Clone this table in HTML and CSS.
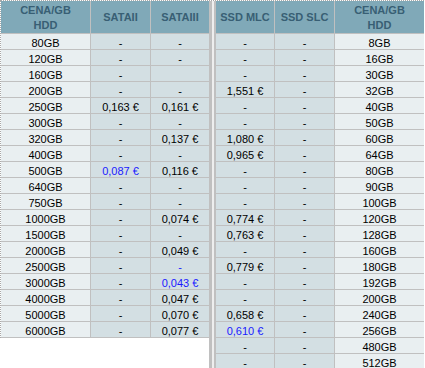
FILE: index.html
```html
<!DOCTYPE html>
<html>
<head>
<meta charset="utf-8">
<link rel="stylesheet" href="styles.css">
</head>
<body>
<div class="wrap">
  <div class="pane pane-left">
    <table class="grid grid-left">
      <colgroup><col class="c-cap"><col class="c-a"><col class="c-b"></colgroup>
      <thead>
        <tr><th class="two">CENA/GB<br>HDD</th><th>SATAII</th><th class="last">SATAIII</th></tr>
      </thead>
      <tbody>
        <tr><td class="cap">80GB</td><td>-</td><td class="last">-</td></tr>
        <tr><td class="cap">120GB</td><td>-</td><td class="last">-</td></tr>
        <tr><td class="cap">160GB</td><td>-</td><td class="last"></td></tr>
        <tr><td class="cap">200GB</td><td>-</td><td class="last">-</td></tr>
        <tr><td class="cap">250GB</td><td>0,163 €</td><td class="last">0,161 €</td></tr>
        <tr><td class="cap">300GB</td><td>-</td><td class="last">-</td></tr>
        <tr><td class="cap">320GB</td><td>-</td><td class="last">0,137 €</td></tr>
        <tr><td class="cap">400GB</td><td>-</td><td class="last">-</td></tr>
        <tr><td class="cap">500GB</td><td class="best">0,087 €</td><td class="last">0,116 €</td></tr>
        <tr><td class="cap">640GB</td><td>-</td><td class="last">-</td></tr>
        <tr><td class="cap">750GB</td><td>-</td><td class="last">-</td></tr>
        <tr><td class="cap">1000GB</td><td>-</td><td class="last">0,074 €</td></tr>
        <tr><td class="cap">1500GB</td><td>-</td><td class="last">-</td></tr>
        <tr><td class="cap">2000GB</td><td>-</td><td class="last">0,049 €</td></tr>
        <tr><td class="cap">2500GB</td><td>-</td><td class="last best">-</td></tr>
        <tr><td class="cap">3000GB</td><td>-</td><td class="last best">0,043 €</td></tr>
        <tr><td class="cap">4000GB</td><td>-</td><td class="last">0,047 €</td></tr>
        <tr><td class="cap">5000GB</td><td>-</td><td class="last">0,070 €</td></tr>
        <tr><td class="cap">6000GB</td><td>-</td><td class="last">0,077 €</td></tr>
      </tbody>
    </table>
  </div>
  <div class="gap"></div>
  <div class="pane pane-right">
    <table class="grid grid-right">
      <colgroup><col class="c-m"><col class="c-s"><col class="c-cap2"></colgroup>
      <thead>
        <tr><th>SSD MLC</th><th>SSD SLC</th><th class="last two">CENA/GB<br>HDD</th></tr>
      </thead>
      <tbody>
        <tr><td>-</td><td>-</td><td class="cap last">8GB</td></tr>
        <tr><td>-</td><td>-</td><td class="cap last">16GB</td></tr>
        <tr><td>-</td><td>-</td><td class="cap last">30GB</td></tr>
        <tr><td>1,551 €</td><td>-</td><td class="cap last">32GB</td></tr>
        <tr><td>-</td><td>-</td><td class="cap last">40GB</td></tr>
        <tr><td>-</td><td>-</td><td class="cap last">50GB</td></tr>
        <tr><td>1,080 €</td><td>-</td><td class="cap last">60GB</td></tr>
        <tr><td>0,965 €</td><td>-</td><td class="cap last">64GB</td></tr>
        <tr><td>-</td><td>-</td><td class="cap last">80GB</td></tr>
        <tr><td>-</td><td>-</td><td class="cap last">90GB</td></tr>
        <tr><td>-</td><td>-</td><td class="cap last">100GB</td></tr>
        <tr><td>0,774 €</td><td>-</td><td class="cap last">120GB</td></tr>
        <tr><td>0,763 €</td><td>-</td><td class="cap last">128GB</td></tr>
        <tr><td>-</td><td>-</td><td class="cap last">160GB</td></tr>
        <tr><td>0,779 €</td><td>-</td><td class="cap last">180GB</td></tr>
        <tr><td>-</td><td>-</td><td class="cap last">192GB</td></tr>
        <tr><td>-</td><td>-</td><td class="cap last">200GB</td></tr>
        <tr><td>0,658 €</td><td>-</td><td class="cap last">240GB</td></tr>
        <tr><td class="best">0,610 €</td><td>-</td><td class="cap last">256GB</td></tr>
        <tr><td>-</td><td>-</td><td class="cap last">480GB</td></tr>
        <tr><td>-</td><td>-</td><td class="cap last">512GB</td></tr>
      </tbody>
    </table>
  </div>
</div>
</body>
</html>
```

FILE: styles.css
```css
html, body {
  margin: 0;
  padding: 0;
  background: #ffffff;
}

body {
  width: 425px;
  height: 368px;
  overflow: hidden;
  font-family: "Liberation Sans", Arial, sans-serif;
}

.wrap {
  display: flex;
  width: 424px;
  height: 368px;
  box-sizing: border-box;
  border-top: 1px dotted #a8a8a8;
}

.pane-left {
  width: 212px;
  box-sizing: border-box;
  border-right: 3px solid #c0c0c0;
}

.gap {
  width: 2px;
  background: #eeeeee;
}

.pane-right {
  width: 210px;
  box-sizing: border-box;
  border-left: 2px solid #c0c0c0;
}

.grid {
  border-collapse: separate;
  border-spacing: 0;
  table-layout: fixed;
  font-size: 11px;
  color: #000000;
}

.grid-left {
  width: 209px;
  border-left: 1px dotted #a8a8a8;
}

.grid-right {
  width: 208px;
}

.c-cap { width: 90px; }
.c-a { width: 60px; }
.c-b { width: 58px; }

.c-m { width: 59px; }
.c-s { width: 60px; }
.c-cap2 { width: 89px; }

.grid th {
  background: #80a9b8;
  color: #385f74;
  font-size: 11px;
  font-weight: bold;
  line-height: 15px;
  height: 32px;
  padding: 0;
  box-sizing: border-box;
  text-align: center;
  vertical-align: middle;
  white-space: nowrap;
  border-right: 1px solid #c0c0c0;
  border-bottom: 1px solid #c0c0c0;
}

.grid th.two {
  padding-top: 2px;
}

.grid td {
  background: #d3dfe3;
  height: 16px;
  line-height: 12px;
  padding: 3px 0 0;
  box-sizing: border-box;
  text-align: center;
  vertical-align: top;
  white-space: nowrap;
  border-right: 1px solid #c0c0c0;
  border-bottom: 1px solid #c0c0c0;
}

.grid td.cap {
  background: #e9eff1;
}

.grid .last {
  border-right: none;
}

.grid td.best {
  color: #1a1aff;
}
```
